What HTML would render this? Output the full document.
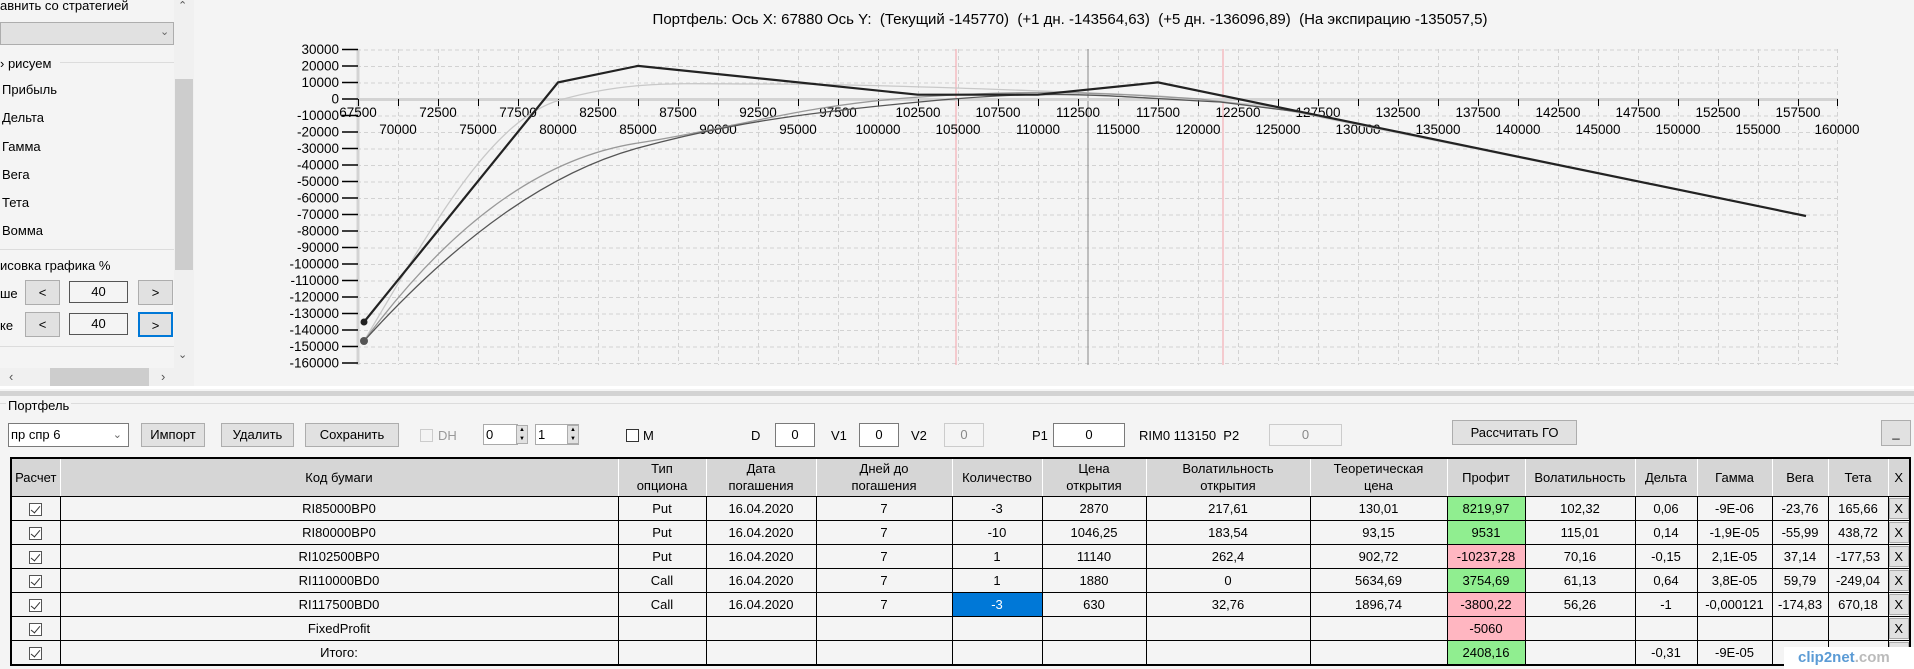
<!DOCTYPE html>
<html><head><meta charset="utf-8">
<style>
*{box-sizing:border-box;margin:0;padding:0}
body{width:1914px;height:669px;overflow:hidden;background:#f4f4f4;font-family:"Liberation Sans",Arial,sans-serif;font-size:13px;color:#000;position:relative}
.a{position:absolute;white-space:nowrap}
.btn{position:absolute;background:#e1e1e1;border:1px solid #adadad;text-align:center;font-size:13px}
.tb{position:absolute;background:#fff;border:1px solid #7a7a7a;text-align:center;font-size:13px}
table{position:absolute;left:10px;top:457px;border-collapse:collapse;table-layout:fixed;width:1899px;border:2px solid #000}
td,th{border:1px solid #000;text-align:center;font-weight:normal;font-size:13px;height:24px;padding:0;overflow:hidden;white-space:nowrap}
th{background:#d6d6d6;height:38px;line-height:17px;border-color:#a0a0a0 #fff #000 #fff;border-right:1px solid #fff}
.g{background:#90ee90}.p{background:#ffb6c1}.s{background:#0078d7;color:#fff}
.cb{display:inline-block;width:13px;height:13px;border:1px solid #555;background:#fff;vertical-align:middle;position:relative}
.cb:after{content:"";position:absolute;left:3px;top:0px;width:4px;height:8px;border:solid #333;border-width:0 1px 1px 0;transform:rotate(40deg)}
.x{display:block;margin:1px auto;width:20px;height:21px;background:#e1e1e1;border:1px solid #adadad;line-height:19px}
</style></head><body>

<div class="a" style="left:0;top:-2px;font-size:13px">авнить со стратегией</div>
<div class="a" style="left:0;top:22px;width:174px;height:23px;background:#e1e1e1;border:1px solid #adadad"></div>
<div class="a" style="left:160px;top:25px;color:#666;font-size:11px">&#8964;</div>
<div class="a" style="left:60px;top:62px;width:114px;height:1px;background:#dcdcdc"></div>
<div class="a" style="left:0;top:56px">› рисуем</div>
<div class="a" style="left:2px;top:82px">Прибыль</div>
<div class="a" style="left:2px;top:110px">Дельта</div>
<div class="a" style="left:2px;top:139px">Гамма</div>
<div class="a" style="left:2px;top:167px">Вега</div>
<div class="a" style="left:2px;top:195px">Тета</div>
<div class="a" style="left:2px;top:223px">Вомма</div>
<div class="a" style="left:0;top:249px;width:174px;height:1px;background:#dcdcdc"></div>
<div class="a" style="left:0;top:258px;background:#f4f4f4">исовка графика %</div>
<div class="a" style="left:0;top:286px">ше</div>
<div class="btn" style="left:25px;top:280px;width:35px;height:25px;line-height:23px">&lt;</div>
<div class="tb" style="left:69px;top:281px;width:59px;height:22px;line-height:20px;background:#f4f4f4;border-color:#555">40</div>
<div class="btn" style="left:138px;top:280px;width:35px;height:25px;line-height:23px">&gt;</div>
<div class="a" style="left:0;top:318px">ке</div>
<div class="btn" style="left:25px;top:312px;width:35px;height:25px;line-height:23px">&lt;</div>
<div class="tb" style="left:69px;top:313px;width:59px;height:22px;line-height:20px;background:#f4f4f4;border-color:#555">40</div>
<div class="btn" style="left:138px;top:312px;width:35px;height:25px;line-height:23px;border:2px solid #0078d7">&gt;</div>
<div class="a" style="left:0;top:346px;width:174px;height:1px;background:#dcdcdc"></div>
<div class="a" style="left:174px;top:0;width:20px;height:368px;background:#f0f0f0"></div>
<div class="a" style="left:175px;top:79px;width:18px;height:191px;background:#cdcdcd"></div>
<div class="a" style="left:178px;top:-1px;color:#555;font-size:11px">&#8963;</div>
<div class="a" style="left:178px;top:348px;color:#555;font-size:11px">&#8964;</div>
<div class="a" style="left:0;top:368px;width:194px;height:18px;background:#f0f0f0"></div>
<div class="a" style="left:50px;top:368px;width:99px;height:18px;background:#cdcdcd"></div>
<div class="a" style="left:9px;top:369px;color:#555">‹</div>
<div class="a" style="left:161px;top:369px;color:#555">›</div>

<div class="a" style="left:0;width:2140px;text-align:center;top:11px;font-size:15px">Портфель: Ось X: 67880 Ось Y:&nbsp; (Текущий -145770)&nbsp; (+1 дн. -143564,63)&nbsp; (+5 дн. -136096,89)&nbsp; (На экспирацию -135057,5)</div>

<svg class="a" style="left:0;top:0" width="1914" height="390" xmlns="http://www.w3.org/2000/svg" font-family="Liberation Sans, Arial, sans-serif" font-size="13.5">
<defs>
<pattern id="pv" x="358" y="0" width="40" height="390" patternUnits="userSpaceOnUse"><line x1="0.5" y1="0" x2="0.5" y2="390" stroke="#d2d2d2" stroke-dasharray="4,3"/></pattern>
<pattern id="ph" x="0" y="49.5" width="1914" height="16.5" patternUnits="userSpaceOnUse"><line x1="0" y1="0.5" x2="1914" y2="0.5" stroke="#d2d2d2" stroke-dasharray="4,3"/></pattern>
</defs>
<rect x="358" y="49" width="1480" height="316" fill="url(#pv)"/>
<rect x="358" y="49" width="1480" height="316" fill="url(#ph)"/>
<line x1="1837.5" y1="49" x2="1837.5" y2="365" stroke="#d2d2d2" stroke-dasharray="4,3"/>
<line x1="956" y1="49" x2="956" y2="365" stroke="#f4a0a8"/>
<line x1="1223" y1="49" x2="1223" y2="365" stroke="#f4a0a8"/>
<line x1="1088" y1="49" x2="1088" y2="365" stroke="#888"/>
<line x1="358" y1="49" x2="358" y2="365" stroke="#d3d3d3" stroke-width="3"/>
<line x1="358" y1="99.5" x2="1838" y2="99.5" stroke="#d3d3d3" stroke-width="3"/>
<g stroke="#000" stroke-width="1.5">
<line x1="342" y1="49.5" x2="358" y2="49.5"/><line x1="342" y1="66" x2="358" y2="66"/><line x1="342" y1="82.5" x2="358" y2="82.5"/><line x1="342" y1="99" x2="358" y2="99"/><line x1="342" y1="115.5" x2="358" y2="115.5"/><line x1="342" y1="132" x2="358" y2="132"/><line x1="342" y1="148.5" x2="358" y2="148.5"/><line x1="342" y1="165" x2="358" y2="165"/><line x1="342" y1="181.5" x2="358" y2="181.5"/><line x1="342" y1="198" x2="358" y2="198"/><line x1="342" y1="214.5" x2="358" y2="214.5"/><line x1="342" y1="231" x2="358" y2="231"/><line x1="342" y1="247.5" x2="358" y2="247.5"/><line x1="342" y1="264" x2="358" y2="264"/><line x1="342" y1="280.5" x2="358" y2="280.5"/><line x1="342" y1="297" x2="358" y2="297"/><line x1="342" y1="313.5" x2="358" y2="313.5"/><line x1="342" y1="330" x2="358" y2="330"/><line x1="342" y1="346.5" x2="358" y2="346.5"/><line x1="342" y1="363" x2="358" y2="363"/>
</g>
<g text-anchor="end" fill="#000">
<text x="339" y="54">30000</text><text x="339" y="70.5">20000</text><text x="339" y="87">10000</text><text x="339" y="103.5">0</text><text x="339" y="120">-10000</text><text x="339" y="136.5">-20000</text><text x="339" y="153">-30000</text><text x="339" y="169.5">-40000</text><text x="339" y="186">-50000</text><text x="339" y="202.5">-60000</text><text x="339" y="219">-70000</text><text x="339" y="235.5">-80000</text><text x="339" y="252">-90000</text><text x="339" y="268.5">-100000</text><text x="339" y="285">-110000</text><text x="339" y="301.5">-120000</text><text x="339" y="318">-130000</text><text x="339" y="334.5">-140000</text><text x="339" y="351">-150000</text><text x="339" y="367.5">-160000</text>
</g>
<g stroke="#000" stroke-width="1">
<path d="M358.5 99v7M398.5 99v7M438.5 99v7M478.5 99v7M518.5 99v7M558.5 99v7M598.5 99v7M638.5 99v7M678.5 99v7M718.5 99v7M758.5 99v7M798.5 99v7M838.5 99v7M878.5 99v7M918.5 99v7M958.5 99v7M998.5 99v7M1038.5 99v7M1078.5 99v7M1118.5 99v7M1158.5 99v7M1198.5 99v7M1238.5 99v7M1278.5 99v7M1318.5 99v7M1358.5 99v7M1398.5 99v7M1438.5 99v7M1478.5 99v7M1518.5 99v7M1558.5 99v7M1598.5 99v7M1638.5 99v7M1678.5 99v7M1718.5 99v7M1758.5 99v7M1798.5 99v7M1837.5 99v7"/>
</g>
<g text-anchor="middle" fill="#000">
<text x="358" y="117">67500</text><text x="438" y="117">72500</text><text x="518" y="117">77500</text><text x="598" y="117">82500</text><text x="678" y="117">87500</text><text x="758" y="117">92500</text><text x="838" y="117">97500</text><text x="918" y="117">102500</text><text x="998" y="117">107500</text><text x="1078" y="117">112500</text><text x="1158" y="117">117500</text><text x="1238" y="117">122500</text><text x="1318" y="117">127500</text><text x="1398" y="117">132500</text><text x="1478" y="117">137500</text><text x="1558" y="117">142500</text><text x="1638" y="117">147500</text><text x="1718" y="117">152500</text><text x="1798" y="117">157500</text>
<text x="398" y="134">70000</text><text x="478" y="134">75000</text><text x="558" y="134">80000</text><text x="638" y="134">85000</text><text x="718" y="134">90000</text><text x="798" y="134">95000</text><text x="878" y="134">100000</text><text x="958" y="134">105000</text><text x="1038" y="134">110000</text><text x="1118" y="134">115000</text><text x="1198" y="134">120000</text><text x="1278" y="134">125000</text><text x="1358" y="134">130000</text><text x="1438" y="134">135000</text><text x="1518" y="134">140000</text><text x="1598" y="134">145000</text><text x="1678" y="134">150000</text><text x="1758" y="134">155000</text><text x="1837" y="134">160000</text>
</g>
<g fill="none" stroke-width="1.3">
<path d="M364 341 C430 230 490 120 560 100 S680 84 760 84 S980 88 1160 96 L1260 105 L1806 216" stroke="#c8c8c8"/>
<path d="M364 341 C450 225 540 158 638 143 S800 105 920 97 S1100 93 1200 99 L1300 112" stroke="#999"/>
<path d="M364 341 C460 235 550 172 638 148 S800 113 930 101 S1100 96 1220 102 L1300 112" stroke="#555"/>
</g>
<polyline points="364,322 558,82.4 638,65.9 918,94.7 1038,94.7 1158,82.4 1806,216" fill="none" stroke="#222" stroke-width="2.2"/>
<circle cx="364" cy="322" r="3.5" fill="#222"/>
<circle cx="364" cy="341" r="4" fill="#555"/>
</svg>

<div class="a" style="left:0;top:386px;width:1914px;height:3px;background:#fff"></div>
<div class="a" style="left:0;top:391px;width:1914px;height:5px;background:#d3d3d3"></div>
<div class="a" style="left:0;top:403px;width:1914px;height:1px;background:#dcdcdc"></div>
<div class="a" style="left:6px;top:398px;padding:0 2px;background:#f4f4f4">Портфель</div>

<div class="tb" style="left:8px;top:423px;width:121px;height:24px;text-align:left;padding-left:2px;line-height:22px">пр спр 6<span style="position:absolute;right:6px;color:#666;font-size:11px">&#8964;</span></div>
<div class="btn" style="left:141px;top:423px;width:64px;height:24px;line-height:22px">Импорт</div>
<div class="btn" style="left:221px;top:423px;width:73px;height:24px;line-height:22px">Удалить</div>
<div class="btn" style="left:305px;top:423px;width:94px;height:24px;line-height:22px">Сохранить</div>
<div class="a" style="left:420px;top:429px;width:13px;height:13px;border:1px solid #ccc;background:#f4f4f4"></div>
<div class="a" style="left:438px;top:428px;color:#999">DH</div>
<div class="tb" style="left:483px;top:424px;width:35px;height:21px;text-align:left;padding-left:2px;line-height:19px;border-color:#aaa">0</div>
<div class="a" style="left:516px;top:425px;width:12px;height:19px;background:#e1e1e1;border:1px solid #adadad;font-size:6px;line-height:9px;text-align:center">▲<br>▼</div>
<div class="tb" style="left:535px;top:424px;width:44px;height:21px;text-align:left;padding-left:2px;line-height:19px;border-color:#aaa">1</div>
<div class="a" style="left:567px;top:425px;width:12px;height:19px;background:#e1e1e1;border:1px solid #adadad;font-size:6px;line-height:9px;text-align:center">▲<br>▼</div>
<div class="a" style="left:626px;top:429px;width:13px;height:13px;border:1px solid #333;background:#fff"></div>
<div class="a" style="left:643px;top:428px">M</div>
<div class="a" style="left:751px;top:428px">D</div>
<div class="tb" style="left:775px;top:423px;width:40px;height:24px;line-height:22px">0</div>
<div class="a" style="left:831px;top:428px">V1</div>
<div class="tb" style="left:859px;top:423px;width:40px;height:24px;line-height:22px">0</div>
<div class="a" style="left:911px;top:428px">V2</div>
<div class="tb" style="left:944px;top:423px;width:40px;height:24px;line-height:22px;border-color:#ccc;color:#888;background:#f4f4f4">0</div>
<div class="a" style="left:1032px;top:428px">P1</div>
<div class="tb" style="left:1053px;top:423px;width:72px;height:24px;line-height:22px">0</div>
<div class="a" style="left:1139px;top:428px">RIM0 113150&nbsp; P2</div>
<div class="tb" style="left:1269px;top:424px;width:73px;height:22px;line-height:20px;border-color:#ccc;color:#888;background:#f4f4f4">0</div>
<div class="btn" style="left:1452px;top:420px;width:125px;height:25px;line-height:23px">Рассчитать ГО</div>
<div class="btn" style="left:1881px;top:420px;width:30px;height:26px;line-height:24px">_</div>

<table>
<colgroup><col style="width:49px"><col style="width:558px"><col style="width:88px"><col style="width:110px"><col style="width:136px"><col style="width:90px"><col style="width:104px"><col style="width:164px"><col style="width:137px"><col style="width:78px"><col style="width:110px"><col style="width:62px"><col style="width:75px"><col style="width:56px"><col style="width:60px"><col style="width:22px"></colgroup>
<tr><th>Расчет</th><th>Код бумаги</th><th>Тип<br>опциона</th><th>Дата<br>погашения</th><th>Дней до<br>погашения</th><th>Количество</th><th>Цена<br>открытия</th><th>Волатильность<br>открытия</th><th>Теоретическая<br>цена</th><th>Профит</th><th>Волатильность</th><th>Дельта</th><th>Гамма</th><th>Вега</th><th>Тета</th><th>X</th></tr>
<tr><td><span class="cb"></span></td><td>RI85000BP0</td><td>Put</td><td>16.04.2020</td><td>7</td><td>-3</td><td>2870</td><td>217,61</td><td>130,01</td><td class="g">8219,97</td><td>102,32</td><td>0,06</td><td>-9E-06</td><td>-23,76</td><td>165,66</td><td><span class="x">X</span></td></tr>
<tr><td><span class="cb"></span></td><td>RI80000BP0</td><td>Put</td><td>16.04.2020</td><td>7</td><td>-10</td><td>1046,25</td><td>183,54</td><td>93,15</td><td class="g">9531</td><td>115,01</td><td>0,14</td><td>-1,9E-05</td><td>-55,99</td><td>438,72</td><td><span class="x">X</span></td></tr>
<tr><td><span class="cb"></span></td><td>RI102500BP0</td><td>Put</td><td>16.04.2020</td><td>7</td><td>1</td><td>11140</td><td>262,4</td><td>902,72</td><td class="p">-10237,28</td><td>70,16</td><td>-0,15</td><td>2,1E-05</td><td>37,14</td><td>-177,53</td><td><span class="x">X</span></td></tr>
<tr><td><span class="cb"></span></td><td>RI110000BD0</td><td>Call</td><td>16.04.2020</td><td>7</td><td>1</td><td>1880</td><td>0</td><td>5634,69</td><td class="g">3754,69</td><td>61,13</td><td>0,64</td><td>3,8E-05</td><td>59,79</td><td>-249,04</td><td><span class="x">X</span></td></tr>
<tr><td><span class="cb"></span></td><td>RI117500BD0</td><td>Call</td><td>16.04.2020</td><td>7</td><td class="s">-3</td><td>630</td><td>32,76</td><td>1896,74</td><td class="p">-3800,22</td><td>56,26</td><td>-1</td><td>-0,000121</td><td>-174,83</td><td>670,18</td><td><span class="x">X</span></td></tr>
<tr><td><span class="cb"></span></td><td>FixedProfit</td><td></td><td></td><td></td><td></td><td></td><td></td><td></td><td class="p">-5060</td><td></td><td></td><td></td><td></td><td></td><td><span class="x">X</span></td></tr>
<tr><td><span class="cb"></span></td><td>Итого:</td><td></td><td></td><td></td><td></td><td></td><td></td><td></td><td class="g">2408,16</td><td></td><td>-0,31</td><td>-9E-05</td><td>-15</td><td></td><td><span class="x"></span></td></tr>
</table>

<div class="a" style="left:1784px;top:647px;width:130px;height:22px;background:#fff;font-size:15px;font-weight:bold;line-height:22px;padding-left:14px"><span style="color:#5b9bd5">clip2net</span><span style="color:#bbb">.com</span></div>
</body></html>
